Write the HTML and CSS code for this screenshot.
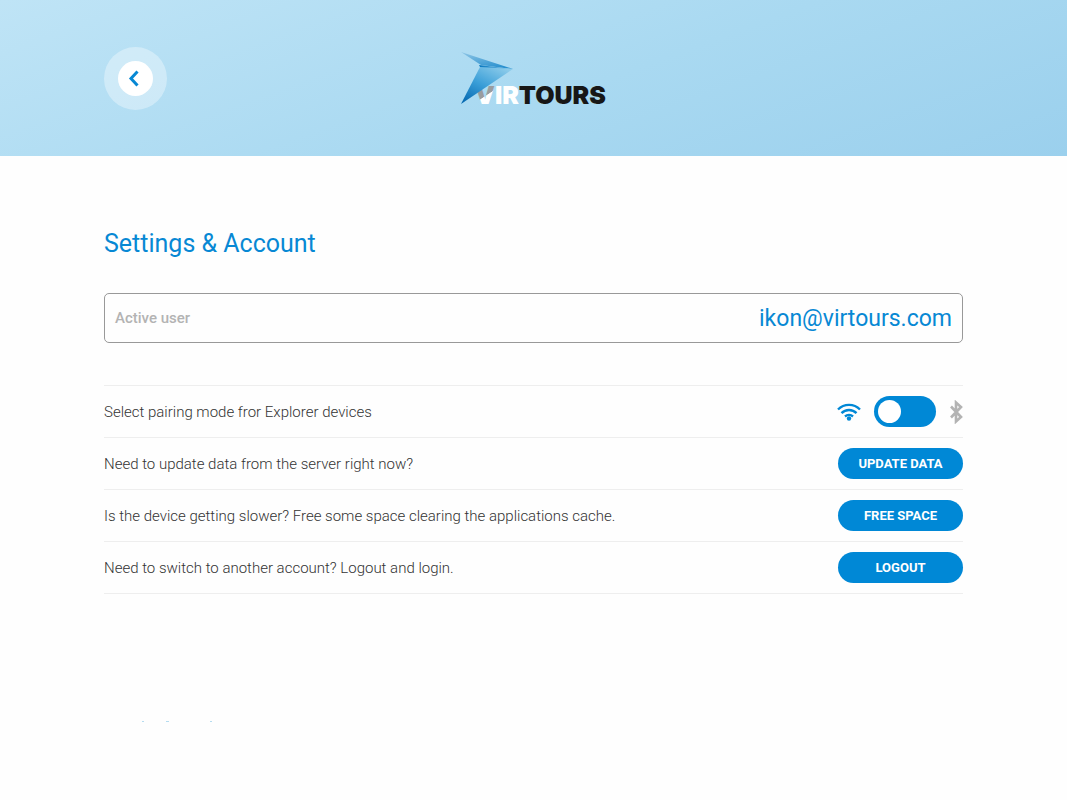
FILE: index.html
```html
<!DOCTYPE html>
<html lang="en">
<head>
    <meta charset="UTF-8">
    <meta name="viewport" content="width=device-width, initial-scale=1.0">
    <title>Virtours - Settings &amp; Account</title>
    <link rel="stylesheet" href="styles.css">
</head>
<body>
    <header class="header">
        <button class="back" type="button" aria-label="Back">
            <span class="back-inner">
                <svg width="12" height="18" viewBox="0 0 12 18" fill="none" stroke="#0788d4" stroke-width="3">
                    <path d="M9.500 2.500 3 9.500l6.500 7"/>
                </svg>
            </span>
        </button>
        <svg class="logo" width="150" height="60" viewBox="0 0 150 60" role="img" aria-label="Virtours">
            <defs>
                <linearGradient id="wing" x1="0" y1="0" x2="0.600" y2="1">
                    <stop offset="0" stop-color="#8fc6e6"/>
                    <stop offset="1" stop-color="#2b91cf"/>
                </linearGradient>
                <linearGradient id="beak" x1="0" y1="0" x2="1" y2="0">
                    <stop offset="0" stop-color="#0878c0"/>
                    <stop offset="1" stop-color="#7cc3e8"/>
                </linearGradient>
                <linearGradient id="tail" x1="0.800" y1="0" x2="0.100" y2="1">
                    <stop offset="0" stop-color="#8ccbea"/>
                    <stop offset="0.500" stop-color="#3b9fd8"/>
                    <stop offset="1" stop-color="#0468b0"/>
                </linearGradient>
                <linearGradient id="letter" gradientUnits="userSpaceOnUse" x1="26" y1="40" x2="30" y2="46">
                    <stop offset="0.900" stop-color="#999da0"/>
                    <stop offset="1" stop-color="#ffffff"/>
                </linearGradient>
            </defs>
            <text class="logo-text" x="16" y="56"><tspan fill="url(#letter)">V</tspan><tspan fill="#ffffff">IR</tspan><tspan fill="#171717">TOURS</tspan></text>
            <path d="M2 4 54 21 22 17z" fill="url(#wing)"/>
            <path d="M20 17 54 21 22 21z" fill="url(#beak)"/>
            <path d="M21 19 54 21 2 56z" fill="url(#tail)"/>
        </svg>
    </header>

    <main class="content">
        <h1 class="title">Settings &amp; Account</h1>

        <div class="user">
            <span class="user-label">Active user</span>
            <span class="user-email">ikon@virtours.com</span>
        </div>

        <ul class="options">
            <li class="option">
                <label for="pairing">Select pairing mode fror Explorer devices</label>
                <div class="pairing">
                    <svg width="24" height="18" viewBox="0 0 24 18" fill="none" stroke="#0088d6" stroke-width="2.400">
                        <path d="M1 6.500a15.500 15.500 0 0 1 22 0M4.500 10.200a10.500 10.500 0 0 1 15 0M8 13.500a6 6 0 0 1 8 0"/>
                        <circle cx="12" cy="15.500" r="2.200" fill="#0088d6" stroke="none"/>
                    </svg>
                    <input class="switch" id="pairing" type="checkbox" role="switch">
                    <svg width="14" height="24" viewBox="0 0 14 24" fill="none" stroke="#b3b3b3" stroke-width="2.600">
                        <path d="M2 6.500 12 17l-5 4.500V2.500L12 7 2 17.500"/>
                    </svg>
                </div>
            </li>
            <li class="option">
                <span>Need to update data from the server right now?</span>
                <button class="btn" type="button">UPDATE DATA</button>
            </li>
            <li class="option">
                <span>Is the device getting slower? Free some space clearing the applications cache.</span>
                <button class="btn" type="button">FREE SPACE</button>
            </li>
            <li class="option">
                <span>Need to switch to another account? Logout and login.</span>
                <button class="btn" type="button">LOGOUT</button>
            </li>
        </ul>

        <svg class="specks" width="120" height="2" viewBox="0 0 120 2" fill="#b5dcf0" aria-hidden="true">
            <path d="M38 0h2v1h-2zM62 0h3v1h-3zM106 0h2v1h-2z"/>
        </svg>
    </main>
</body>
</html>
```

FILE: styles.css
```css
* {
    box-sizing: border-box;
}

body {
    margin: 0;
    font-family: Roboto, "Liberation Sans", sans-serif;
    font-size: 15px;
    color: #333;
    background: #fefefe;
}

.header {
    display: grid;
    grid-template-columns: 1fr auto 1fr;
    align-items: center;
    height: 156px;
    padding: 0 104px;
    background: linear-gradient(160deg, #bfe4f6 0%, #a9d9f1 55%, #9bd0ed 100%);
}

.back {
    display: flex;
    align-items: center;
    justify-content: center;
    width: 63px;
    height: 63px;
    padding: 0;
    border: 0;
    border-radius: 50%;
    background: rgba(255, 255, 255, 0.35);
    cursor: pointer;
}

.back-inner {
    display: flex;
    align-items: center;
    justify-content: center;
    width: 35px;
    height: 35px;
    padding-right: 4px;
    border-radius: 50%;
    background: #fff;
}

.logo {
    display: block;
    overflow: visible;
}

.logo-text {
    font-family: Inter, "Liberation Sans", sans-serif;
    font-size: 25px;
    font-weight: 900;
}

.content {
    padding: 72px 104px;
}

.title {
    margin: 0 0 33px;
    font-size: 25px;
    font-weight: 400;
    line-height: 32px;
    color: #0788d4;
}

.user {
    display: flex;
    align-items: center;
    justify-content: space-between;
    height: 50px;
    padding: 0 10px;
    border: 1px solid #999;
    border-radius: 5px;
}

.user-label {
    font-weight: 500;
    color: #b3b3b3;
}

.user-email {
    font-size: 23px;
    color: #0788d4;
}

.options {
    margin: 42px 0 0;
    padding: 0;
    list-style: none;
    font-weight: 300;
    border-top: 1px solid #eee;
}

.option {
    display: flex;
    align-items: center;
    justify-content: space-between;
    height: 52px;
    border-bottom: 1px solid #eee;
}

.pairing {
    display: flex;
    align-items: center;
    gap: 13px;
}

.switch {
    appearance: none;
    width: 62px;
    height: 31px;
    margin: 0;
    padding: 4px;
    border-radius: 16px;
    background: #0088d6;
    cursor: pointer;
}

.switch::before {
    content: "";
    display: block;
    width: 23px;
    height: 23px;
    border-radius: 50%;
    background: #fff;
}

.switch:checked::before {
    margin-left: auto;
}

.btn {
    width: 125px;
    height: 31px;
    padding: 0;
    border: 0;
    border-radius: 16px;
    font-family: inherit;
    font-size: 13px;
    font-weight: 700;
    color: #fff;
    background: #0088d6;
    cursor: pointer;
}

.specks {
    display: block;
    margin-top: 127px;
}
```
